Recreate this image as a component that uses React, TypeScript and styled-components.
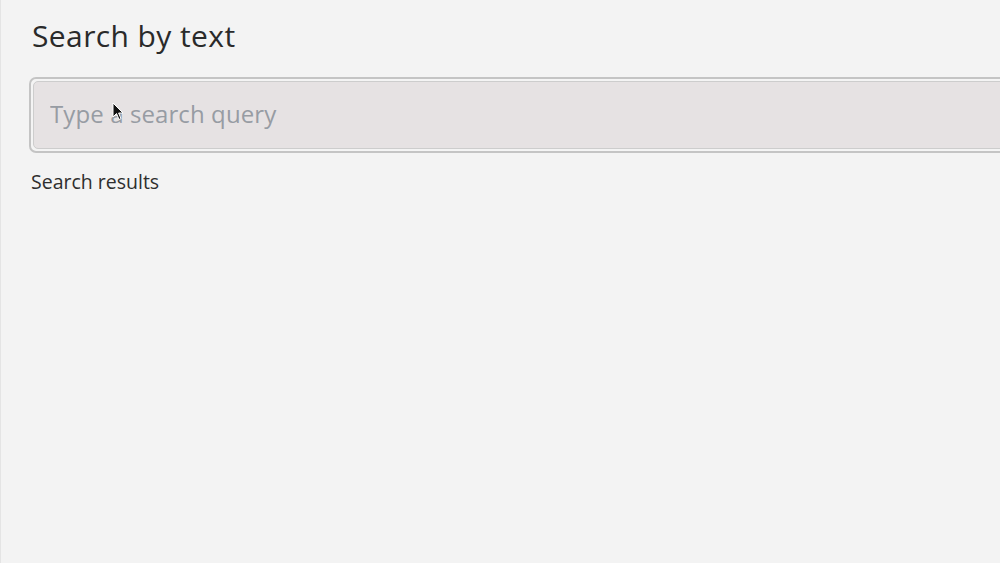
import styled, { createGlobalStyle } from "styled-components";

const GlobalStyle = createGlobalStyle`
  html, body {
    margin: 0;
    padding: 0;
    background: #f2f2f2;
    overflow: hidden;
  }

  body {
    font-family: "Open Sans", "Liberation Sans", sans-serif;
    color: #2b2b2b;
  }
`;

const Page = styled.div`
  position: relative;
  width: 1000px;
  height: 563px;
  box-sizing: border-box;
  padding: 14px 0 0 28px;
  border-left: 1px solid #e4e4e4;
  background: #f3f3f3;
  overflow: hidden;
`;

const Title = styled.h1`
  margin: 0 0 0 3px;
  font-size: 30px;
  font-weight: 400;
  line-height: 44px;
  letter-spacing: 0.4px;
  color: #2a2a2a;
`;

const Field = styled.div`
  margin-top: 19px;
  width: 1000px;
  box-sizing: border-box;
  padding: 2px;
  border: 2px solid #c4c4c4;
  border-radius: 7px;
  background: #f4f4f4;
`;

const Input = styled.input`
  display: block;
  width: 100%;
  height: 68px;
  box-sizing: border-box;
  padding: 0 0 4px 16px;
  border: 1px solid #cdcdcd;
  border-radius: 5px;
  background: #e6e2e3;
  font-family: "Open Sans", "Liberation Sans", sans-serif;
  font-size: 24px;
  letter-spacing: 0.1px;
  color: #2a2a2a;
  outline: none;

  &::placeholder {
    color: #979ca3;
  }
`;

const Label = styled.div`
  margin: 17px 0 0 2px;
  font-size: 19.5px;
  line-height: 24px;
  color: #2e2e2e;
`;

const Cursor = styled.svg`
  position: absolute;
  left: 111px;
  top: 102px;
  width: 12px;
  height: 19px;
  pointer-events: none;
`;

export default function App() {
  return (
    <>
      <GlobalStyle />
      <Page>
        <Title>Search by text</Title>
        <Field>
          <Input placeholder="Type a search query" />
        </Field>
        <Label>Search results</Label>
        <Cursor viewBox="0 0 12 19">
          <path
            d="M1 1 L1 15 L4.5 11.5 L7 17.5 L9 16.6 L6.6 11 L11 11 Z"
            fill="#111"
            stroke="#fff"
            strokeWidth="1"
            strokeLinejoin="round"
          />
        </Cursor>
      </Page>
    </>
  );
}
